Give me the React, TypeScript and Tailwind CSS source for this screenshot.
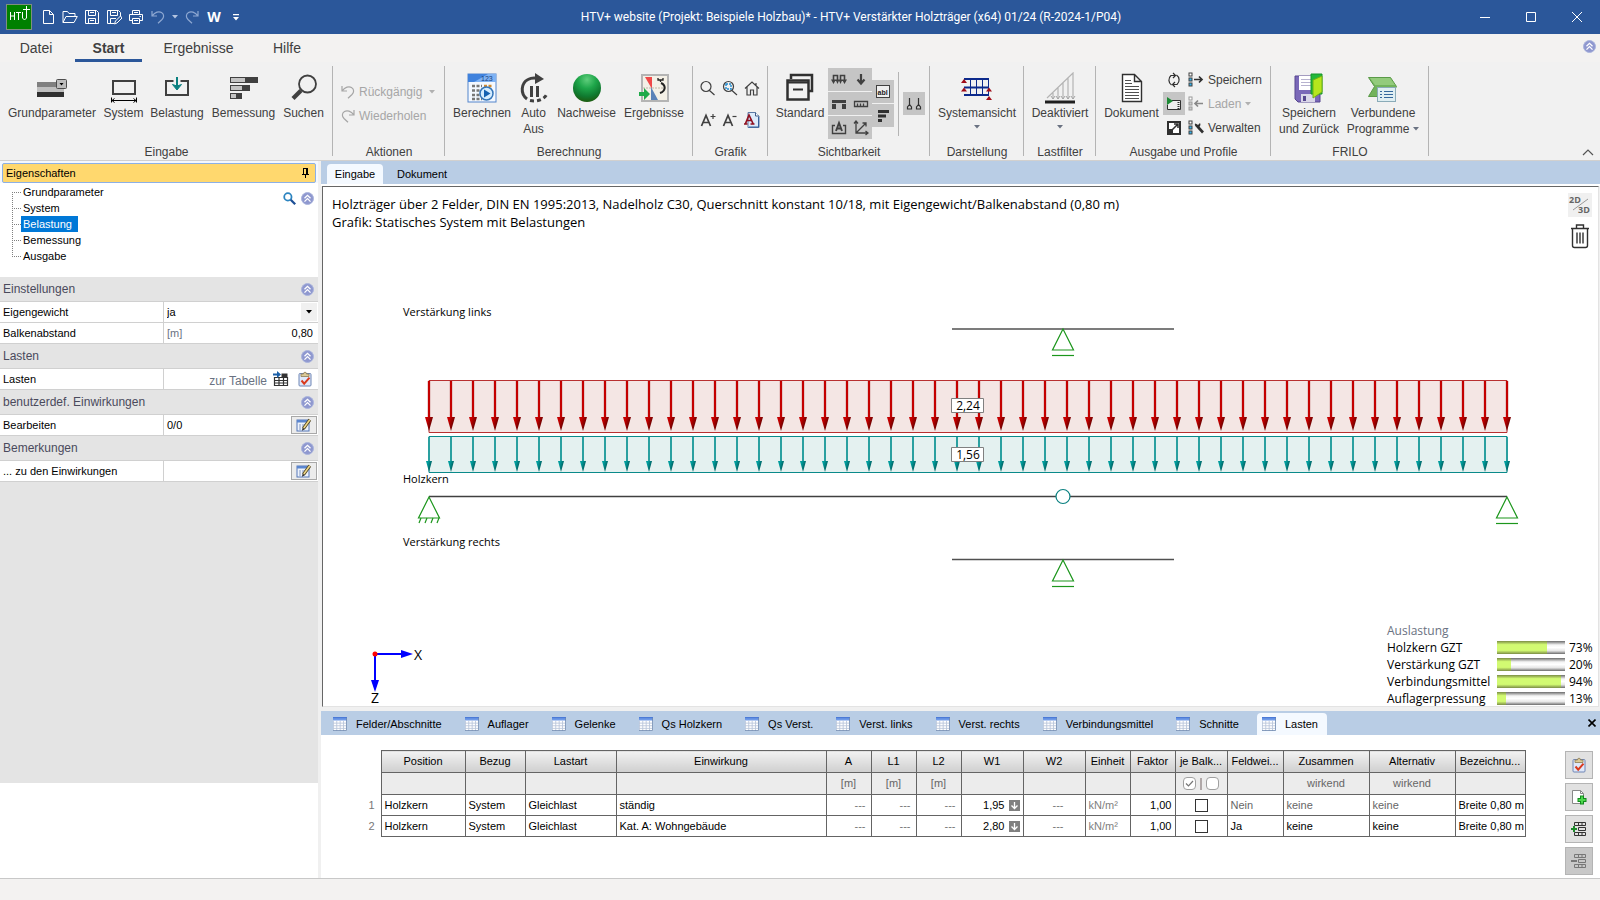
import { useState } from "react";
import type { ReactNode } from "react";

type IconProps = { children: ReactNode; size?: number };

const Big = ({ children }: IconProps) => (
  <svg width="32" height="32" viewBox="0 0 32 32" fill="none" className="shrink-0">
    {children}
  </svg>
);

const Small = ({ children, size = 16 }: IconProps) => (
  <svg width={size} height={size} viewBox="0 0 16 16" fill="none" className="shrink-0">
    {children}
  </svg>
);

const Caret = ({ className = "text-gray-500" }: { className?: string }) => (
  <svg width="6" height="4" viewBox="0 0 6 4" className={`shrink-0 ${className}`}>
    <path d="M0 0h6L3 3.5z" fill="currentColor" />
  </svg>
);

const RoundChevron = () => (
  <svg width="13" height="13" viewBox="0 0 13 13" fill="none" className="shrink-0">
    <circle cx="6.5" cy="6.5" r="6" fill="#8f98cf" stroke="#aab4dc" />
    <path d="M3.5 6.3l3-3 3 3M3.5 9.6l3-3 3 3" stroke="#fff" strokeWidth="1.3" />
  </svg>
);

const Undo = () => (
  <Small>
    <path d="M2 2v5h5M2.3 6.7C5 3 9 2 11.5 3.5c3 2 2.5 5 .5 7L8 14.3" stroke="currentColor" strokeWidth="1.2" />
  </Small>
);

const Redo = () => (
  <Small>
    <path d="M14 2v5H9M13.7 6.7C11 3 7 2 4.5 3.5c-3 2-2.5 5-.5 7L8 14.3" stroke="currentColor" strokeWidth="1.2" />
  </Small>
);

const Clipboard = () => (
  <Small>
    <rect x="2" y="2.5" width="12" height="12.5" rx="1" fill="#dfe8fa" stroke="#6f86b5" />
    <path d="M4 5.500V3h2.500a1.500 1.800 0 013 0H12v2.500z" fill="#dccb98" stroke="#8d7b50" strokeWidth=".8" />
    <path d="M4.500 9.500l2.700 3.200 5.300-6" stroke="#d93a1e" strokeWidth="2" />
  </Small>
);

const EditIcon = () => (
  <Small>
    <rect x="1" y="3" width="12" height="11" fill="#eef3fc" stroke="#5577b8" />
    <path d="M1 3h12v2.500H1z" fill="#5b86cf" />
    <path d="M3 8h2M3 10h2M3 12h2M6 8h3M6 10h2" stroke="#8097c4" />
    <path d="M7.500 11.500l6.300-8.700" stroke="#4d4222" strokeWidth="3.200" />
    <path d="M7.800 11l6-8.200" stroke="#f0d98a" strokeWidth="1.600" />
    <path d="M6 13.800l.6-3 2 1.500z" fill="#222" />
  </Small>
);

const GridIcon = () => (
  <Small size={14}>
    <rect x="0" y="0" width="16" height="16" fill="#fff" />
    <path d="M0 0h16v4H0z" fill="#6f9ae8" />
    <path d="M0 0h16v1.500H0z" fill="#4c7ad6" />
    <path d="M.5 4v11.500M4.300 4v12M8.200 4v12M12 4v12M0 7h15M0 10h15M0 13h15" stroke="#b9c6da" />
    <path d="M15.500 1v14.500H0" stroke="#6f89b0" />
  </Small>
);

const ProfileDots = ({ muted }: { muted?: boolean }) => (
  <g stroke={muted ? "#9a9a9a" : "#404040"}>
    <rect x="1" y="1" width="3" height="3" fill="#fff" />
    <rect x="1" y="6" width="3" height="3" fill={muted ? "#ccc" : "#35b4ef"} />
    <rect x="1" y="11" width="3" height="3" fill={muted ? "#ccc" : "#35b4ef"} />
  </g>
);

const BigButton = ({ label, icon, width, caret }: { label: string[]; icon: ReactNode; width: string; caret?: boolean }) => (
  <button className={`flex flex-col items-center ${width}`}>
    <Big>{icon}</Big>
    <span className="mt-px flex flex-col items-center leading-4 whitespace-nowrap">
      {label.map((line, i) => (
        <span key={line} className="flex items-center gap-1">
          {line}
          {caret && i === 1 && <Caret />}
        </span>
      ))}
    </span>
    {caret && label.length === 1 && <Caret className="mt-1 text-gray-500" />}
  </button>
);

const Group = ({ title, width, children }: { title: string; width: string; children: ReactNode }) => (
  <section className={`relative flex shrink-0 flex-col ${width}`}>
    <div className="flex flex-1 items-start">{children}</div>
    <h2 className="h-4 text-center leading-4">{title}</h2>
    <span className="absolute top-1 right-0 h-[90px] w-px bg-[#b4b4b4]" />
  </section>
);

const inputTools = [
  {
    label: "Grundparameter",
    width: "w-24",
    icon: (
      <>
        <path d="M1 10h27v5H1z" fill="#808080" />
        <path d="M1 15h27v5H1z" fill="#bfbfbf" />
        <path d="M1 20h27v5H1z" fill="#303030" />
        <rect x="20.5" y="7.5" width="10" height="9" rx="1" fill="#bdbdbd" stroke="#4d4d4d" />
        <path d="M23.500 11h4l-2 2.500z" fill="#000" />
      </>
    ),
  },
  {
    label: "System",
    width: "w-[47px]",
    icon: (
      <>
        <rect x="5" y="9" width="22" height="13" stroke="#404040" strokeWidth="2" />
        <path d="M3.500 25.500v5M28.500 25.500v5M4 28.500h24M6.500 26.500l-2.500 2 2.500 2M25.500 26.500l2.500 2-2.500 2" stroke="#000" />
      </>
    ),
  },
  {
    label: "Belastung",
    width: "w-[60px]",
    icon: (
      <>
        <path d="M12.500 9H5v14h22V9h-7.500" stroke="#404040" strokeWidth="2" />
        <path d="M16 5v11" stroke="#0a8080" strokeWidth="2" />
        <path d="M11.500 12.500L16 18l4.500-5.500L16 14z" fill="#0a8080" stroke="#0a8080" />
      </>
    ),
  },
  {
    label: "Bemessung",
    width: "w-[73px]",
    icon: (
      <>
        <path d="M2 5h28v6H2zM2 13h20v6H2zM2 21h12v6H2z" fill="#404040" />
        <path d="M3 6h14v4H3zM3 14h11v4H3zM3 22h5v4H3z" fill="#c4c4c4" />
      </>
    ),
  },
  {
    label: "Suchen",
    width: "w-[47px]",
    icon: (
      <>
        <circle cx="19.5" cy="12" r="8.5" stroke="#404040" strokeWidth="1.8" />
        <path d="M13 18.500l-8 8" stroke="#404040" strokeWidth="4.200" />
      </>
    ),
  },
];

const calcTools = [
  {
    label: ["Berechnen"],
    width: "w-16",
    icon: (
      <>
        <rect x="2" y="2" width="28" height="28" fill="#f3f8ff" stroke="#5486cc" />
        <path d="M2 2h28v8H2z" fill="#7fb2f3" />
        <path d="M2 2h20L8 10H2z" fill="#3f82dd" />
        <text x="15" y="9" fontSize="7" fill="#153f80">123</text>
        <path d="M6 14h10M6 18.500h8M6 23h8M6 27h10" stroke="#777" strokeWidth="2.500" strokeDasharray="3 1.500" />
        <path d="M18 14h9" stroke="#d08a30" strokeWidth="2.500" strokeDasharray="3 1.500" />
        <circle cx="20.5" cy="21.5" r="6.5" fill="#d4ecff" stroke="#3475b8" strokeWidth="1.5" />
        <path d="M18 17.500l6.500 4-6.500 4z" fill="#1461b2" />
      </>
    ),
  },
  {
    label: ["Auto", "Aus"],
    width: "w-[39px]",
    icon: (
      <>
        <path d="M9 27C2 22 3 11 10 7.500c3-1.600 6-1.700 9-1.200" stroke="#404040" strokeWidth="3" />
        <path d="M17 1l9 6-9 5z" fill="#404040" />
        <path d="M12 28.500c7 1.500 15-1 17-7" stroke="#404040" strokeWidth="3" strokeDasharray="4 3" />
        <path d="M13.500 14v11M19.500 14v11" stroke="#404040" strokeWidth="3" />
      </>
    ),
  },
  {
    label: ["Nachweise"],
    width: "w-[67px]",
    icon: (
      <>
        <defs>
          <radialGradient id="ball" cx=".5" cy=".2" r=".8">
            <stop offset="0" stopColor="#5fce7c" />
            <stop offset=".4" stopColor="#1ea64a" />
            <stop offset=".75" stopColor="#107a30" />
            <stop offset="1" stopColor="#1d5c10" />
          </radialGradient>
        </defs>
        <circle cx="16" cy="16" r="14" fill="url(#ball)" />
      </>
    ),
  },
  {
    label: ["Ergebnisse"],
    width: "w-[68px]",
    icon: (
      <>
        <rect x="4" y="3" width="26" height="26" fill="#f4f0e6" stroke="#b4b4b4" strokeWidth="2" />
        <path d="M5 16h24" stroke="#c0b8a8" strokeDasharray="2 1" />
        <path d="M7 5h7v12z" fill="#f04848" />
        <path d="M13 15l7 13h-7z" fill="#5b83b8" />
        <path d="M23 11c5 2 5 8-1 10" stroke="#222" strokeWidth="2" />
        <path d="M20 6v2h5V6M22.500 8v2" stroke="#222" strokeWidth="1.300" />
        <path d="M1 20h5v-4l6 6-6 6v-4H1z" fill="#1faa48" />
      </>
    ),
  },
];

const zoomTools = [
  {
    label: "Zoom",
    icon: <path d="M11 6.500a5 5 0 11-10 0 5 5 0 0110 0zM9.500 10.500l5 4.500" stroke="#404040" strokeWidth="1.200" />,
  },
  {
    label: "Zoom Auswahl",
    icon: (
      <>
        <path d="M11.500 6.500a5 5 0 11-10 0 5 5 0 0110 0zM10 10.500l5 4.500" stroke="#404040" strokeWidth="1.200" />
        <rect x="4" y="4" width="5" height="5" stroke="#1e8bd0" strokeWidth="1.4" strokeDasharray="2 1" />
      </>
    ),
  },
  {
    label: "Alles zeigen",
    icon: <path d="M1 8.500L8 2l7 6.500M3 7v8h3.500v-5h3v5H13V7M12 5.500V3" stroke="#404040" strokeWidth="1.200" />,
  },
  {
    label: "Schrift größer",
    icon: (
      <>
        <path d="M1.500 14L6 3.500 10.500 14M3 10.500h6" stroke="#404040" strokeWidth="1.700" />
        <path d="M13 2v5M10.500 4.500h5" stroke="#404040" strokeWidth="1.200" />
      </>
    ),
  },
  {
    label: "Schrift kleiner",
    icon: (
      <>
        <path d="M1.500 14L6 3.500 10.500 14M3 10.500h6" stroke="#404040" strokeWidth="1.700" />
        <path d="M10.500 4.500h4" stroke="#404040" strokeWidth="1.200" />
      </>
    ),
  },
  {
    label: "Schriftart",
    icon: (
      <>
        <path d="M4 .5h7.500l3.500 3.500v11.500H4z" fill="#dcebfb" stroke="#5a79a5" />
        <path d="M11.500.5V4H15" fill="#fff" stroke="#3d5c88" />
        <path d="M14.500 5v10H5" stroke="#35609c" />
        <path d="M1.500 11.500L5 3l4 8.500M3 8.500h4M0 12h3.500M6.500 12h4" stroke="#8f1020" strokeWidth="1.700" />
      </>
    ),
  },
];

const visibilityTools = [
  {
    label: "Lasten",
    icon: (
      <>
        <path d="M2.500 9V3.500h4V9M9.500 9V3.500h4V9" stroke="#404040" strokeWidth="1.600" />
        <path d="M0 7.500h5L2.500 12zM4.500 7.500h4L6.500 12zM7.500 7.500h4L9.500 12zM11 7.500h5L13.500 12z" fill="#404040" />
      </>
    ),
  },
  { label: "Einzellasten", icon: <path d="M8 2v9M4.500 7.500L8 11.500l3.500-4" stroke="#404040" strokeWidth="2.200" /> },
  { label: "Auflager", icon: <path d="M1 4h14v3H1zM1 8h4v5H1zM11 8h4v5h-4z" fill="#404040" /> },
  { label: "Bemaßung", icon: <path d="M1.500 5.500h13v5h-13zM4.500 7.500v3M7.500 7.500v3M10.500 7.500v3" stroke="#404040" strokeWidth="1.300" /> },
  {
    label: "Beschriftung",
    icon: (
      <>
        <path d="M4 5.500H1.500v8h13v-8H12" stroke="#404040" strokeWidth="1.400" />
        <path d="M5 11l3-8 3 8M6 8.500h4" stroke="#404040" strokeWidth="1.900" />
      </>
    ),
  },
  {
    label: "Achsen",
    icon: <path d="M3 1v12h12M1 3.500L3 1l2 2.500M12.500 11l2.500 2-2.500 2M3 13L13 3M9.500 3H13v3.500" stroke="#404040" strokeWidth="1.300" />,
  },
];

const properties = [
  { title: "Einstellungen", rows: ["Eigengewicht", "Balkenabstand"] },
  { title: "Lasten", rows: ["Lasten"] },
  { title: "benutzerdef. Einwirkungen", rows: ["Bearbeiten"] },
  { title: "Bemerkungen", rows: ["... zu den Einwirkungen"] },
];

const utilisation = [
  { name: "Holzkern GZT", value: 73 },
  { name: "Verstärkung GZT", value: 20 },
  { name: "Verbindungsmittel", value: 94 },
  { name: "Auflagerpressung", value: 13 },
];

const tableTabs = [
  "Felder/Abschnitte",
  "Auflager",
  "Gelenke",
  "Qs Holzkern",
  "Qs Verst.",
  "Verst. links",
  "Verst. rechts",
  "Verbindungsmittel",
  "Schnitte",
  "Lasten",
];

const columns = [
  { title: "Position", unit: "", width: "w-[84px]" },
  { title: "Bezug", unit: "", width: "w-[60px]" },
  { title: "Lastart", unit: "", width: "w-[91px]" },
  { title: "Einwirkung", unit: "", width: "w-[210px]" },
  { title: "A", unit: "[m]", width: "w-[45px]" },
  { title: "L1", unit: "[m]", width: "w-[45px]" },
  { title: "L2", unit: "[m]", width: "w-[45px]" },
  { title: "W1", unit: "", width: "w-[62px]" },
  { title: "W2", unit: "", width: "w-[62px]" },
  { title: "Einheit", unit: "", width: "w-[45px]" },
  { title: "Faktor", unit: "", width: "w-[45px]" },
  { title: "je Balk...", unit: "check", width: "w-[52px]" },
  { title: "Feldwei...", unit: "", width: "w-[56px]" },
  { title: "Zusammen", unit: "wirkend", width: "w-[86px]" },
  { title: "Alternativ", unit: "wirkend", width: "w-[86px]" },
  { title: "Bezeichnu...", unit: "", width: "w-[70px]" },
];

const loads = [
  { action: "ständig", w1: "1,95", span: "Nein", muted: true },
  { action: "Kat. A: Wohngebäude", w1: "2,80", span: "Ja", muted: false },
];

const TitleBar = () => (
  <header className="flex h-[34px] shrink-0 items-center bg-[#2b579a] text-xs text-white">
    <svg width="26" height="26" viewBox="0 0 26 26" className="ml-1.5 shrink-0">
      <rect x=".5" y=".5" width="25" height="25" fill="#008000" stroke="#7f8f7f" />
      <path d="M4.500 8v8M8.500 8v8M4.500 12h4M10 8.500h5M12.500 8.500V16M16.500 8v6l2 2 2-2V8M20.500 2v7M17 5.500h7" stroke="#fff" fill="none" />
    </svg>
    <nav className="flex items-center pl-[5px]" aria-label="Schnellzugriff">
      <button aria-label="Neu" className="flex w-[22px] justify-center">
        <Small>
          <path d="M3.500 1.500h6l4 4v9h-10zM9.500 1.500v4h4" stroke="#fff" />
        </Small>
      </button>
      <button aria-label="Öffnen" className="flex w-[22px] justify-center">
        <Small>
          <path d="M1 13.500v-11h4.500l1.500 2h6v3M1 13.500h11l3.300-6H4z" stroke="#fff" />
        </Small>
      </button>
      <button aria-label="Speichern" className="flex w-[22px] justify-center">
        <Small>
          <path d="M1.500 1.500h11l2 2v11h-13zM4.500 1.500v5h7v-5M4.500 14.500v-5h7v5M6 3.500h4M6 11.500h4" stroke="#fff" />
        </Small>
      </button>
      <button aria-label="Speichern unter" className="flex w-[22px] justify-center">
        <Small>
          <path d="M8 14.500H1.500v-13h11l2 2V7M4.500 1.500v5h7v-5M4.500 14.500v-5H10M6 3.500h4M8.500 15l1-3 5-5 1.500 2-5 5z" stroke="#fff" />
        </Small>
      </button>
      <button aria-label="Drucken" className="flex w-[22px] justify-center">
        <Small>
          <path d="M4.500 5.500v-4h7v4M4 11.500H1.500v-6h13v6H12M4.500 9.500h7v5h-7zM6 11.500h4M6 3.500h4M11.500 7.500H13" stroke="#fff" />
        </Small>
      </button>
      <button aria-label="Rückgängig" className="flex w-[22px] justify-center text-[#8ea8d2]">
        <Undo />
      </button>
      <button aria-label="Verlauf" className="flex w-3 justify-center">
        <Caret className="text-[#b4c4e0]" />
      </button>
      <button aria-label="Wiederholen" className="flex w-[22px] justify-center text-[#8ea8d2]">
        <Redo />
      </button>
      <button className="flex w-[22px] justify-center font-['Open_Sans',sans-serif] text-sm leading-4 font-bold">W</button>
      <button aria-label="Anpassen" className="flex w-[22px] justify-center">
        <svg width="6" height="7" viewBox="0 0 6 7">
          <path d="M0 0h6v1.200H0zM0 3h6L3 6.500z" fill="#fff" />
        </svg>
      </button>
    </nav>
    <h1 className="flex-1 pr-[7px] text-center font-[Roboto,sans-serif] whitespace-nowrap">
      HTV+ website (Projekt: Beispiele Holzbau)* - HTV+ Verstärkter Holzträger (x64) 01/24 (R-2024-1/P04)
    </h1>
    <div className="flex">
      <button aria-label="Minimieren" className="flex w-[46px] justify-center">
        <Small>
          <path d="M3 8.500h10" stroke="#fff" />
        </Small>
      </button>
      <button aria-label="Maximieren" className="flex w-[46px] justify-center">
        <Small>
          <path d="M3.500 3.500h9v9h-9z" stroke="#fff" />
        </Small>
      </button>
      <button aria-label="Schließen" className="flex w-[46px] justify-center">
        <Small>
          <path d="M3 3l10 10M13 3L3 13" stroke="#fff" />
        </Small>
      </button>
    </div>
  </header>
);

const Ribbon = () => (
  <div className="flex h-[99px] shrink-0 border-b border-[#d2d0ce] bg-[#f1f1f1] text-xs text-[#404040]">
    <Group title="Eingabe" width="w-[333px]">
      <div className="flex pt-2.5 pl-1">
        {inputTools.map((t) => (
          <BigButton key={t.label} label={[t.label]} icon={t.icon} width={t.width} />
        ))}
      </div>
    </Group>
    <Group title="Aktionen" width="w-28">
      <div className="flex flex-col gap-2 pt-[22px] pl-[7px] text-[#a6a6a6]">
        <button disabled className="flex h-4 items-center gap-[3px] whitespace-nowrap">
          <Undo />
          Rückgängig
          <Caret className="ml-1 text-[#b0b0b0]" />
        </button>
        <button disabled className="flex h-4 items-center gap-[3px]">
          <Redo />
          Wiederholen
        </button>
      </div>
    </Group>
    <Group title="Berechnung" width="w-[248px]">
      <div className="flex pt-2.5 pl-[5px]">
        {calcTools.map((t) => (
          <BigButton key={t.label[0]} {...t} />
        ))}
      </div>
    </Group>
    <Group title="Grafik" width="w-[75px]">
      <div className="grid grid-cols-3 gap-x-1.5 gap-y-4 pt-[18px] pl-[7px]">
        {zoomTools.map((t) => (
          <button key={t.label} aria-label={t.label}>
            <Small>{t.icon}</Small>
          </button>
        ))}
      </div>
    </Group>
    <Group title="Sichtbarkeit" width="w-[162px]">
      <div className="pt-2.5 pl-1">
        <BigButton
          label={["Standard"]}
          width="w-[56px]"
          icon={
            <>
              <path d="M7 7V3h21v16h-4" stroke="#303030" strokeWidth="2.500" />
              <rect x="3.5" y="8.5" width="21" height="19" stroke="#303030" strokeWidth="2.5" />
              <path d="M4 10.500h20M9 17.500h10" stroke="#303030" strokeWidth="2" />
            </>
          }
        />
      </div>
      <div className="mt-1.5 grid grid-cols-2 gap-y-px bg-[#f1f1f1]">
        {visibilityTools.map((t) => (
          <button key={t.label} aria-label={t.label} className="flex h-[23px] w-[22px] items-center justify-center bg-[#c5c5c5]">
            <Small>{t.icon}</Small>
          </button>
        ))}
      </div>
      <div className="mt-[18px] flex flex-col gap-px">
        <button aria-label="Textfelder" className="flex h-[23px] w-[22px] items-center justify-center bg-[#c5c5c5]">
          <Small>
            <rect x="1.5" y="1.5" width="13" height="12" fill="#eee" stroke="#404040" />
            <text x="2.500" y="10.500" fontSize="7" fontWeight="bold" fill="#222">abl</text>
          </Small>
        </button>
        <button aria-label="Auslastung" className="flex h-[23px] w-[22px] items-center justify-center bg-[#c5c5c5]">
          <Small>
            <path d="M3 2h11v3H3zM3 6.500h8v3H3zM3 11h4v3H3z" fill="#303030" />
          </Small>
        </button>
      </div>
      <span className="mt-2.5 ml-1 h-16 w-px bg-[#b4b4b4]" />
      <button aria-label="Lager" className="mt-[30px] ml-1 flex h-[23px] w-[22px] items-center justify-center bg-[#c5c5c5]">
        <Small>
          <path d="M3.500 2v7M3.500 8.500l-2 2.500v2h4v-2zM12.500 2v7M12.500 8.500l-2 2.500v2h4v-2z" stroke="#303030" strokeWidth="1.200" />
        </Small>
      </button>
    </Group>
    <Group title="Darstellung" width="w-[94px]">
      <div className="pt-2.5 pl-1">
        <BigButton
          label={["Systemansicht"]}
          width="w-[86px]"
          caret
          icon={
            <>
              <path d="M3 7h25M3 15.500h25M3 23h25" stroke="#0c2a8c" strokeWidth="2" />
              <path d="M9.500 7v16M15.500 7v16M21.500 7v16M27.500 7v16" stroke="#0c2a8c" />
              <path d="M3 7l3 4H0zM3 15.500l3 4H0zM28 15.500l3 4h-6zM28 24l3 4h-6z" fill="#a00c18" />
            </>
          }
        />
      </div>
    </Group>
    <Group title="Lastfilter" width="w-[72px]">
      <div className="pt-2.5 pl-1">
        <BigButton
          label={["Deaktiviert"]}
          width="w-16"
          caret
          icon={
            <>
              <path d="M3 26L29 1v26M24 6v21M19 11v16M14 16v11M9 21v6" stroke="#b4b4b4" strokeWidth="1.200" />
              <path d="M7 24l2 3 2-3M12 24l2 3 2-3M17 24l2 3 2-3M22 24l2 3 2-3M27 24l2 3 2-3" stroke="#a4a4a4" />
              <path d="M1 30h30" stroke="#202020" strokeWidth="3" />
            </>
          }
        />
      </div>
    </Group>
    <Group title="Ausgabe und Profile" width="w-[175px]">
      <div className="pt-2.5 pl-1">
        <BigButton
          label={["Dokument"]}
          width="w-[63px]"
          icon={
            <>
              <path d="M6.500 2.500h12l7 7v20h-19zM18.500 2.500v7h7" fill="#fff" stroke="#303030" strokeWidth="1.400" />
              <path d="M9 8.500h6M9 11.500h7M9 14.500h14M9 17.500h14M9 20.500h14M9 23.500h14M9 26.500h14" stroke="#505050" />
            </>
          }
        />
      </div>
      <div className="flex flex-col gap-px pt-1.5">
        <button aria-label="Aktualisieren" className="flex h-[23px] w-[22px] items-center justify-center">
          <Small>
            <path d="M5.500 13A6 6 0 015 3.500h4M10.500 3A6 6 0 0111 12.500H7M7 1l2.500 2.500L7 6M9 10l-2.500 2.500L9 15" stroke="#303030" strokeWidth="1.200" />
          </Small>
        </button>
        <button aria-label="Vorschau" className="flex h-[23px] w-[22px] items-center justify-center bg-[#c5c5c5]">
          <Small>
            <path d="M6 4.500h8.500v9h-13V9" fill="#eee" stroke="#303030" />
            <path d="M12.500 4v10" stroke="#303030" strokeWidth="2" strokeDasharray="1 1" />
            <path d="M1 1l6 4-6 4z" fill="#1c8a34" />
          </Small>
        </button>
        <button aria-label="Vollbild" className="flex h-[23px] w-[22px] items-center justify-center">
          <Small>
            <path d="M2 2h12v12H2z" fill="#fff" stroke="#303030" strokeWidth="2" />
            <path d="M1 9h6v6H1z" fill="#303030" />
            <path d="M6.500 9.500L12 4M8 4h4v4" stroke="#303030" strokeWidth="1.500" />
          </Small>
        </button>
      </div>
      <div className="flex flex-col gap-2 pt-2.5 pl-[3px]">
        <button className="flex h-4 items-center gap-1">
          <Small>
            <ProfileDots />
            <path d="M6 7.500h8M11 4.500l3 3-3 3" stroke="#303030" strokeWidth="1.700" />
          </Small>
          Speichern
        </button>
        <button disabled className="flex h-4 items-center gap-1 text-[#a6a6a6]">
          <Small>
            <ProfileDots muted />
            <path d="M7 7.500h8M10 4.500l-3 3 3 3" stroke="#888" strokeWidth="1.700" />
          </Small>
          Laden
          <Caret className="text-[#b0b0b0]" />
        </button>
        <button className="flex h-4 items-center gap-1">
          <Small>
            <ProfileDots />
            <path d="M9.500 6.500l5.500 6" stroke="#303030" strokeWidth="2.600" />
            <path d="M7 3.500a3 3 0 003 4 3 3 0 002-4.500L10 5 8.500 4z" fill="#303030" />
          </Small>
          Verwalten
        </button>
      </div>
    </Group>
    <Group title="FRILO" width="w-[158px]">
      <div className="flex pt-2.5 pl-1">
        <BigButton
          label={["Speichern", "und Zurück"]}
          width="w-[68px]"
          icon={
            <>
              <path d="M2 4h25v26H5l-3-3z" fill="#7a68b8" stroke="#57478f" />
              <path d="M6 4h15v14H6z" fill="#fff" />
              <path d="M8 7.500h10M8 10.500h10M8 13.500h10" stroke="#b7b2cf" />
              <path d="M8 22h14v8H8z" fill="#d9d6e8" />
              <path d="M10 24h3v5h-3z" fill="#57478f" />
              <path d="M18 2h11v20H18z" fill="#22b83a" stroke="#159428" />
              <path d="M20 8l9-4v16l-9 6z" fill="#b6e61d" stroke="#6fae16" />
            </>
          }
        />
        <BigButton
          label={["Verbundene", "Programme"]}
          width="w-20"
          caret
          icon={
            <>
              <path d="M1.500 5.500h22l6 9-6 10h-22l6-10z" fill="#72b35c" stroke="#5a9a48" />
              <path d="M3 6h20l5 7H8z" fill="#93cb7c" />
              <rect x="10.5" y="15.5" width="18" height="14" fill="#dfeef2" stroke="#8aabb8" />
              <path d="M13 19.500h2M13 22.500h2M13 25.500h2M17 19.500h9M17 22.500h9M17 25.500h9" stroke="#35689c" />
            </>
          }
        />
      </div>
    </Group>
    <button aria-label="Menüband reduzieren" className="ml-auto self-end pr-1.5 pb-1">
      <svg width="12" height="7" viewBox="0 0 12 7" fill="none">
        <path d="M1 6l5-5 5 5" stroke="#555" strokeWidth="1.200" />
      </svg>
    </button>
  </div>
);

const PropertyValue = ({ name }: { name: string }) => {
  if (name === "Eigengewicht") {
    return (
      <div className="relative flex h-full items-center">
        <select id={name} defaultValue="ja" className="h-full w-full appearance-none bg-white pl-[3px] outline-none">
          <option>ja</option>
          <option>nein</option>
        </select>
        <span className="pointer-events-none absolute right-px flex h-[18px] w-4 items-center justify-center bg-[#f0f0f0]">
          <Caret className="text-black" />
        </span>
      </div>
    );
  }
  if (name === "Balkenabstand") {
    return (
      <div className="flex h-full items-center pr-[5px] pl-[3px]">
        <span className="text-gray-500">[m]</span>
        <input id={name} defaultValue="0,80" className="w-0 flex-1 text-right outline-none" />
      </div>
    );
  }
  if (name === "Lasten") {
    return (
      <div className="flex h-full items-center justify-end pr-[5px]">
        <a href="#tabelle" className="mr-1.5 pt-1 text-xs text-gray-500">
          zur Tabelle
        </a>
        <button aria-label="Tabelle öffnen" className="mr-2">
          <Small>
            <path d="M1.500 6.500h13v8h-13zM1.500 9.500h13M1.500 12h13M6 6.500v8M10.500 6.500v8" stroke="#333" strokeWidth="1.200" />
            <path d="M8.500 2.500h6v4h-6z" fill="#333" />
            <path d="M0 2.500h4V0l4 3.500L4 7V4.500H0z" fill="#1a5fa8" />
          </Small>
        </button>
        <button aria-label="Lasten prüfen">
          <Clipboard />
        </button>
      </div>
    );
  }
  return (
    <div className="flex h-full items-center justify-between pl-[3px]">
      <span>{name === "Bearbeiten" ? "0/0" : ""}</span>
      <button aria-label={name} className="mr-px flex h-[18px] w-[26px] items-center justify-center border border-[#a8a8a8] bg-[#ececec]">
        <EditIcon />
      </button>
    </div>
  );
};

const Sidebar = () => {
  const [active, setActive] = useState("Belastung");

  return (
    <aside className="flex w-[318px] shrink-0 flex-col bg-white text-[11px] text-black">
      <div className="bg-[#f4f8fe] px-0.5 pt-0.5">
        <div className="flex h-5 items-center justify-between rounded-xs border border-[#8cb0e6] bg-[#ffd86e] pr-[5px] pl-[3px]">
          <h2>Eigenschaften</h2>
          <button aria-label="Anheften">
            <svg width="9" height="10" viewBox="0 0 9 10" fill="none">
              <path d="M2.500 0v6M1 6.500h7M4.500 6.500V10M2.500.5h4" stroke="#000" />
              <path d="M6 0v6" stroke="#000" strokeWidth="2" />
            </svg>
          </button>
        </div>
      </div>
      <div className="flex h-[94px] justify-between pt-px pr-1">
        <ul className="ml-3">
          {["Grundparameter", "System", "Belastung", "Bemessung", "Ausgabe"].map((item, i) => (
            <li key={item} className="flex h-4 items-center">
              <svg width="9" height="16" className="shrink-0">
                <path d={i === 0 ? "M.5 8v8M0 8.500h9" : i === 4 ? "M.5 0v8M0 8.500h9" : "M.5 0v16M0 8.500h9"} stroke="#808080" strokeDasharray="1 1" />
              </svg>
              <button
                onClick={() => setActive(item)}
                className={`h-4 pr-1.5 pl-0.5 leading-4 ${active === item ? "bg-[#0078d7] text-white" : ""}`}
              >
                {item}
              </button>
            </li>
          ))}
        </ul>
        <div className="flex h-5 items-center gap-[5px] pt-2">
          <button aria-label="Suchen">
            <Small size={13}>
              <circle cx="6" cy="6" r="4.5" stroke="#2c84c0" strokeWidth="2.2" />
              <path d="M9.500 9.500l5.500 5.500" stroke="#1d4f96" strokeWidth="2.800" />
            </Small>
          </button>
          <button aria-label="Alle reduzieren">
            <RoundChevron />
          </button>
        </div>
      </div>
      {properties.map((section) => (
        <section key={section.title}>
          <div className="flex h-[25px] items-center justify-between border-b border-[#d0d0d0] bg-[#e4e4e4] pr-1 pl-[3px]">
            <h3 className="text-xs text-[#4a4a5c]">{section.title}</h3>
            <button aria-label={`${section.title} reduzieren`}>
              <RoundChevron />
            </button>
          </div>
          {section.rows.map((row) => (
            <div key={row} className="flex h-[21px] items-stretch border-b border-[#d0d0d0]">
              <label htmlFor={row} className="flex w-[163px] items-center pl-[3px]">
                {row}
              </label>
              <div className="flex-1 border-l border-[#d0d0d0]">
                <PropertyValue name={row} />
              </div>
            </div>
          ))}
        </section>
      ))}
      <div className="mb-[95px] flex-1 bg-[#e4e4e4]" />
    </aside>
  );
};

const RollerSupport = ({ x, y }: { x: number; y: number }) => (
  <g transform={`translate(${x} ${y})`} stroke="#1c961c" strokeWidth="1.2" fill="none">
    <path d="M0 0l-10.500 21h21z" />
    <path d="M-11 26.500h22" />
  </g>
);

const arrows = Array.from({ length: 50 }, (_, i) => 429 + i * 22);

const BeamDrawing = () => (
  <svg viewBox="323 187 1275 519" className="absolute inset-0 h-full w-full overflow-visible" fontSize="11" fill="#000">
    <defs>
      <linearGradient id="redHead" x1="0" x2="1" y1="0" y2=".6">
        <stop offset=".3" stopColor="#c40000" />
        <stop offset="1" stopColor="#4d0000" />
      </linearGradient>
      <linearGradient id="tealHead" x1="0" x2="1" y1="0" y2=".6">
        <stop offset=".3" stopColor="#009c9c" />
        <stop offset="1" stopColor="#004d4d" />
      </linearGradient>
    </defs>

    <text x="403" y="316">Verstärkung links</text>
    <path d="M952 329h222" stroke="#505050" strokeWidth="1.500" />
    <RollerSupport x={1063} y={329} />

    {/* permanent and imposed line loads */}
    <path d="M429 380.500h1078v52H429z" fill="#f4e6e4" stroke="#b83030" />
    <path d="M429 436.500h1078v36H429z" fill="#e4f1f0" stroke="#0a8a8a" />
    {arrows.map((x) => (
      <g key={x}>
        <path d={`M${x} 381v37`} stroke="#d9a8a8" strokeWidth="3" />
        <path d={`M${x} 381v37`} stroke="#c40000" strokeWidth="2" />
        <path d={`M${x - 4} 417h8l-4 14z`} fill="url(#redHead)" />
        <path d={`M${x} 437v26`} stroke="#2aa0a0" strokeWidth="2" />
        <path d={`M${x - 3} 461h6l-3 11z`} fill="url(#tealHead)" />
      </g>
    ))}
    <g fontSize="12" textAnchor="middle">
      <path d="M951.500 398.500h32v14h-32zM951.500 447.500h32v14h-32z" fill="#fff" stroke="#808080" />
      <text x="968" y="410">2,24</text>
      <text x="968" y="459">1,56</text>
    </g>

    <text x="403" y="483">Holzkern</text>
    <path d="M429 496.500h1078" stroke="#404040" strokeWidth="1.400" />
    <g stroke="#1c961c" strokeWidth="1.2" fill="none">
      <path d="M429 497l-10.500 21h21z" />
      <path d="M421 518l-2 5M427 518l-2 5M433 518l-2 5M439 518l-2 5" />
    </g>
    <RollerSupport x={1507} y={497} />
    <circle cx="1063" cy="496.5" r="7" fill="#fff" stroke="#0a8080" strokeWidth="1.2" />

    <text x="403" y="546">Verstärkung rechts</text>
    <path d="M952 559.500h222" stroke="#505050" strokeWidth="1.500" />
    <RollerSupport x={1063} y={560} />

    <path d="M375 654h27M375 654v27" stroke="#0000ff" strokeWidth="2" />
    <path d="M401 650l12 4-12 4zM371 680l4 12 4-12z" fill="#0000ff" />
    <circle cx="375" cy="654" r="2.5" fill="#ff0000" />
    <g fontSize="14">
      <text x="414" y="660">X</text>
      <text x="371" y="703">Z</text>
    </g>
  </svg>
);

const GraphicView = () => (
  <>
    <div role="tablist" className="flex h-[23px] shrink-0 items-end bg-[#b9cde5] pl-1.5 text-[11px] text-black">
      <button role="tab" aria-selected="true" className="h-5 w-14 rounded-t bg-[#f4f9ff]">
        Eingabe
      </button>
      <button role="tab" aria-selected="false" className="h-5 px-3.5">
        Dokument
      </button>
    </div>
    <div className="h-0.5 shrink-0 bg-white" />
    <div className="relative mx-px min-h-[300px] flex-1 border border-t-[#666] border-r-[#e3e3e3] border-b-[#e3e3e3] border-l-[#666] bg-white font-['Open_Sans',sans-serif] text-black">
      <BeamDrawing />
      <div className="relative pt-2 pl-[9px] text-[13px] leading-[18px]">
        <p>Holzträger über 2 Felder, DIN EN 1995:2013, Nadelholz C30, Querschnitt konstant 10/18, mit Eigengewicht/Balkenabstand (0,80 m)</p>
        <p>Grafik: Statisches System mit Belastungen</p>
      </div>
      <div className="absolute top-1.5 right-1.5 flex flex-col items-center gap-1.5">
        <button aria-label="2D/3D" className="h-6 w-6 bg-[#f0f0f0]">
          <svg width="24" height="24" viewBox="0 0 24 24">
            <g fontSize="9" fontWeight="bold" fill="#666">
              <text x="1" y="10">2D</text>
              <text x="10" y="20">3D</text>
            </g>
            <path d="M5 17L20 6" stroke="#999" />
          </svg>
        </button>
        <button aria-label="Löschen">
          <svg width="20" height="26" viewBox="0 0 20 26" fill="none" stroke="#303030" strokeWidth="1.4">
            <path d="M1 5.500h18M6.500 5V2h7v3M2.500 6v16.500q0 2 2 2h11q2 0 2-2V6M7 9.500v11M10 9.500v11M13 9.500v11" />
          </svg>
        </button>
      </div>
      <div className="absolute right-1 -bottom-px text-xs leading-[17px]">
        <p className="text-gray-500">Auslastung</p>
        {utilisation.map((u) => (
          <div key={u.name} className="flex items-center">
            <span className="w-[110px] whitespace-nowrap">{u.name}</span>
            <div className="h-[13px] w-[68px] bg-[linear-gradient(#6b6b6b,#f4f4f4_30%,#ffffff_50%,#e6e6e6_75%,#6b6b6b)]">
              <div
                className="h-full bg-[linear-gradient(#7b8c45,#d2fa72_28%,#d2fa72_72%,#7b8c45)]"
                style={{ width: `${u.value}%` }}
              />
            </div>
            <span className="w-[29px] pl-1">{u.value}%</span>
          </div>
        ))}
      </div>
    </div>
  </>
);

const LoadTable = () => {
  const [tab, setTab] = useState("Lasten");

  return (
    <div id="tabelle" className="shrink-0 text-[11px] text-black">
      <div className="flex h-6 items-end bg-[#b9cde5] pl-[7px]" role="tablist">
        {tableTabs.map((t) => (
          <button
            key={t}
            role="tab"
            aria-selected={tab === t}
            onClick={() => setTab(t)}
            className={`flex h-[22px] items-center gap-[9px] rounded-t pl-[5px] whitespace-nowrap ${
              tab === t ? "bg-[#f4f9ff] pr-[9px]" : "pr-[18px]"
            }`}
          >
            <GridIcon />
            {t}
          </button>
        ))}
        <button aria-label="Tabelle schließen" className="mr-1 mb-2 ml-auto">
          <svg width="8" height="8" viewBox="0 0 8 8">
            <path d="M.5.5l7 7M7.500.5l-7 7" stroke="#000" strokeWidth="1.600" />
          </svg>
        </button>
      </div>
      <div className="flex h-[143px] justify-between bg-white pt-[15px] pr-[7px] pl-[30px]">
        <table className="h-[86px] w-[1174px] table-fixed border-collapse self-start whitespace-nowrap">
          <colgroup>
            <col className="w-[30px]" />
            {columns.map((c) => (
              <col key={c.title} className={c.width} />
            ))}
          </colgroup>
          <thead>
            <tr className="h-[22px]">
              <td />
              {columns.map((c) => (
                <th key={c.title} className="border border-[#646464] bg-linear-to-b from-[#f2f2f2] to-[#cfcfcf] p-0 font-normal">
                  {c.title}
                </th>
              ))}
            </tr>
            <tr className="h-[22px] text-[#666]">
              <td />
              {columns.map((c) => (
                <td key={c.title} className="border border-[#646464] bg-[#ececec] p-0 text-center">
                  {c.unit === "check" ? (
                    <span className="flex items-center justify-center gap-1">
                      <label className="relative flex">
                        <input type="checkbox" defaultChecked aria-label="Alle wählen" className="peer size-[13px] appearance-none rounded-sm border border-[#a0a0a0] bg-white" />
                        <svg viewBox="0 0 13 13" className="pointer-events-none absolute inset-0 hidden peer-checked:block" fill="none">
                          <path d="M3 6.500l2.500 2.500L10 4" stroke="#777" strokeWidth="1.200" />
                        </svg>
                      </label>
                      <span className="h-3 w-0.5 bg-[#b0a8a8]" />
                      <input type="checkbox" aria-label="Alle abwählen" className="size-[13px] appearance-none rounded-sm border border-[#a0a0a0] bg-white" />
                    </span>
                  ) : (
                    c.unit
                  )}
                </td>
              ))}
            </tr>
          </thead>
          <tbody>
            {loads.map((l, i) => {
              const tone = l.muted ? "text-[#666]" : "text-black";
              return (
                <tr key={l.action} className="h-[21px] [&>td]:px-[3px] [&>td]:py-0 [&>td+td]:border [&>td+td]:border-[#646464]">
                  <td className="text-right text-[#777]"><span className="pr-[3px]">{i + 1}</span></td>
                  <td>Holzkern</td>
                  <td>System</td>
                  <td>Gleichlast</td>
                  <td>{l.action}</td>
                  <td className="text-right text-[#777]"><span className="pr-0.5">---</span></td>
                  <td className="text-right text-[#777]"><span className="pr-0.5">---</span></td>
                  <td className="text-right text-[#777]"><span className="pr-0.5">---</span></td>
                  <td>
                    <span className="flex items-center justify-end gap-1">
                      {l.w1}
                      <button aria-label="Wert übernehmen">
                        <svg width="11" height="11" viewBox="0 0 11 11" className="block" fill="none">
                          <path d="M0 0h11v11H0z" fill="#808080" />
                          <path d="M5.500 2v6M2.500 5.500l3 3 3-3" stroke="#fff" strokeWidth="1.300" />
                        </svg>
                      </button>
                    </span>
                  </td>
                  <td className="text-center text-[#777]"><span className="pl-2">---</span></td>
                  <td className="text-[#808080]">kN/m²</td>
                  <td className="text-right">1,00</td>
                  <td>
                    <input type="checkbox" aria-label={`je Balken, Zeile ${i + 1}`} className="mx-auto block size-[13px] appearance-none border border-[#333] bg-white" />
                  </td>
                  <td className={tone}>{l.span}</td>
                  <td className={tone}>keine</td>
                  <td className={tone}>keine</td>
                  <td>Breite 0,80 m</td>
                </tr>
              );
            })}
          </tbody>
        </table>
        <div className="flex flex-col gap-1 pt-px">
          <button aria-label="Prüfen" className="flex size-7 items-center justify-center border border-[#b4b4b4] bg-[#e1e1e1]">
            <Clipboard />
          </button>
          <button aria-label="Neue Zeile" className="flex size-7 items-center justify-center border border-[#b4b4b4] bg-[#e1e1e1]">
            <Small>
              <path d="M1.500 1.500h8l3 3v10h-11z" fill="#fff" stroke="#888" />
              <path d="M9.500 1.500v3h3" stroke="#888" />
              <path d="M11 6.500v9M6.500 11h9" stroke="#128a1e" strokeWidth="4" />
              <path d="M11 7.500v7M7.500 11h7" stroke="#4cd84c" strokeWidth="2" />
            </Small>
          </button>
          <button aria-label="Zeile einfügen" className="flex size-7 items-center justify-center border border-[#b4b4b4] bg-[#e1e1e1]">
            <Small>
              <path d="M3.500 1.500h11v3h-11zM7.500 6.500h7v3h-7zM3.500 11.500h11v3h-11zM7.500 1.500v3M11 1.500v3M7.500 11.500v3M11 11.500v3" stroke="#333" />
              <path d="M3 5v6M0 8h6" stroke="#1e8a2c" strokeWidth="2" />
            </Small>
          </button>
          <button aria-label="Zeile löschen" disabled className="flex size-7 items-center justify-center border border-[#b4b4b4] bg-[#c8c8c8]">
            <Small>
              <path d="M3.500 1.500h11v3h-11zM7.500 6.500h7v3h-7zM3.500 11.500h11v3h-11zM7.500 1.500v3M11 1.500v3M7.500 11.500v3M11 11.500v3" stroke="#777" />
              <path d="M0 8h6" stroke="#777" strokeWidth="2" />
            </Small>
          </button>
        </div>
      </div>
    </div>
  );
};

const menus = [
  { name: "Datei", width: "w-[72px]" },
  { name: "Start", width: "ml-[3px] w-[67px]" },
  { name: "Ergebnisse", width: "w-[113px]" },
  { name: "Hilfe", width: "w-16" },
];

const App = () => {
  const [menu, setMenu] = useState("Start");

  return (
    <div className="flex h-screen flex-col overflow-hidden bg-[#f0f0f0] font-['Liberation_Sans',Arial,sans-serif]">
      <TitleBar />
      <nav className="flex h-7 shrink-0 items-stretch bg-[#f3f2f1] text-sm text-[#404040]">
        {menus.map((m) => (
          <button
            key={m.name}
            onClick={() => setMenu(m.name)}
            className={`border-b-[3px] pt-0.5 ${m.width} ${menu === m.name ? "border-[#2b579a] font-bold" : "border-transparent"}`}
          >
            {m.name}
          </button>
        ))}
        <button aria-label="Hilfe einblenden" className="mr-1 mb-1 ml-auto">
          <RoundChevron />
        </button>
      </nav>
      <Ribbon />
      <div className="flex min-h-0 flex-1 gap-[3px]">
        <Sidebar />
        <main className="flex min-w-0 flex-1 flex-col">
          <GraphicView />
          <div className="h-1 shrink-0" />
          <LoadTable />
        </main>
      </div>
      <footer className="h-[22px] shrink-0 border-t border-[#c8c8c8] bg-[#f3f2f1]" />
    </div>
  );
};

export default App;
